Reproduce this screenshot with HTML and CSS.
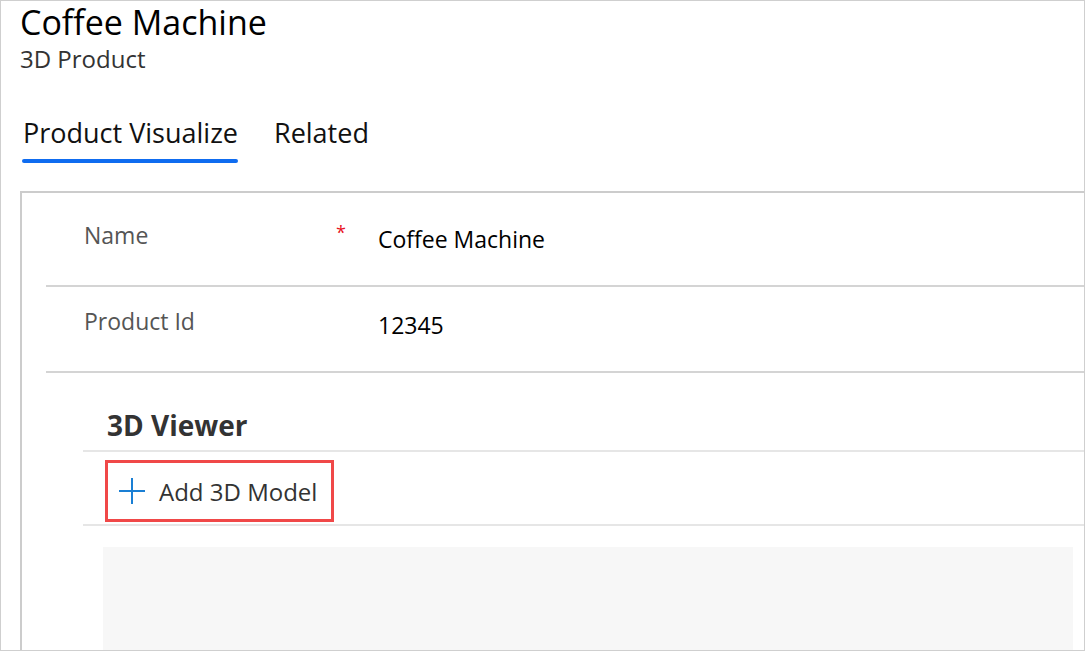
FILE: index.html
```html
<!DOCTYPE html>
<html>
<head>
<meta charset="utf-8">
<link rel="stylesheet" href="styles.css">
</head>
<body>
<div class="frame">
  <header class="header">
    <h1 class="title">Coffee Machine</h1>
    <div class="subtitle">3D Product</div>
  </header>
  <nav class="tabs">
    <div class="tab active">Product Visualize</div>
    <div class="tab">Related</div>
  </nav>
  <section class="card">
    <div class="field">
      <div class="label">Name</div>
      <div class="req">*</div>
      <div class="value">Coffee Machine</div>
    </div>
    <div class="field">
      <div class="label">Product Id</div>
      <div class="req"></div>
      <div class="value">12345</div>
    </div>
    <div class="viewer">
      <h2 class="viewer-title">3D Viewer</h2>
      <div class="toolbar">
        <button class="add-btn">
          <svg class="plus" width="26" height="26" viewBox="0 0 26 26"><path d="M13 0V26M0 13H26" stroke="#1a7fd4" stroke-width="2" fill="none"/></svg>
          <span>Add 3D Model</span>
        </button>
      </div>
      <div class="canvas"></div>
    </div>
  </section>
</div>
</body>
</html>
```
FILE: styles.css
```css
* { box-sizing: border-box; }
html, body { margin: 0; padding: 0; background: #fff; }
body { font-family: "Open Sans", "Noto Sans", sans-serif; color: #000; }
.frame {
  width: 1085px;
  height: 651px;
  border: 1px solid #cfcfcf;
  overflow: hidden;
  padding-left: 19px;
}
.title {
  margin: -2px 0 0;
  font-size: 34px;
  font-weight: 400;
  line-height: 46px;
  color: #000;
}
.subtitle {
  margin-top: -3px;
  font-size: 24px;
  line-height: 33px;
  color: #333;
}
.tabs {
  display: flex;
  gap: 36px;
  margin-top: 40px;
  padding-left: 3px;
}
.tab {
  font-size: 27px;
  line-height: 36px;
  color: #111;
  padding-bottom: 12px;
  position: relative;
}
.tab.active::after {
  content: "";
  position: absolute;
  left: -1px;
  right: 0;
  bottom: 0;
  height: 4px;
  border-radius: 2px;
  background: #0f6cf0;
}
.card {
  margin-top: 28px;
  border-top: 2px solid #cccccc;
  border-left: 2px solid #cccccc;
  width: 1100px;
  padding-left: 24px;
}
.field {
  display: grid;
  grid-template-columns: 252px 42px 1fr;
  padding-left: 38px;
  height: 94px;
  border-bottom: 2px solid #d4d4d4;
  padding-top: 26px;
}
.field + .field { height: 86px; padding-top: 18px; }
.label { font-size: 23px; color: #555; line-height: 32px; }
.req { color: #e81123; font-size: 18px; line-height: 26px; }
.value { font-size: 23px; color: #000; line-height: 40px; }
.viewer { padding-left: 37px; }
.viewer-title {
  margin: 0;
  padding: 31px 0 0 24px;
  font-size: 28px;
  font-weight: 700;
  color: #333;
  line-height: 42px;
  height: 79px;
  border-bottom: 2px solid #e6e6e6;
}
.toolbar {
  height: 74px;
  border-bottom: 2px solid #e6e6e6;
  padding-top: 8px;
  padding-left: 22px;
}
.add-btn {
  display: flex;
  align-items: center;
  gap: 14px;
  height: 62px;
  width: 229px;
  padding: 0 0 0 11px;
  border: 3px solid #f04848;
  background: #fff;
  font-family: inherit;
  font-size: 24px;
  color: #333;
  cursor: pointer;
}
.canvas {
  margin: 21px 0 0 20px;
  width: 970px;
  height: 200px;
  background: #f7f7f7;
}
```
